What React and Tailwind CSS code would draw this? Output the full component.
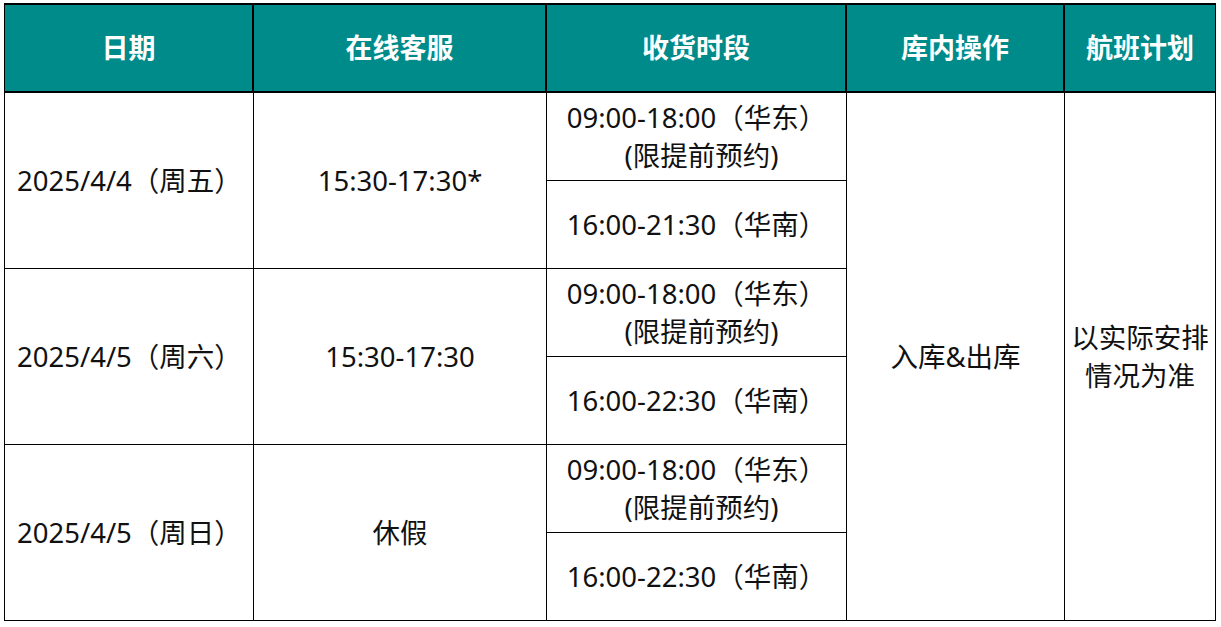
import React from "react";

const font = { fontFamily: '"Noto Sans", "Noto Sans CJK SC", sans-serif' };

function H({ children, last }) {
  return (
    <div
      className={`flex items-center justify-center bg-[#008b8b] text-white font-bold text-[27px] border-b-2 border-black ${last ? "border-r" : "border-r-2"}`}
    >
      {children}
    </div>
  );
}

function C({ children, className = "" }) {
  return (
    <div
      className={`flex items-center justify-center text-center text-[27.5px] leading-[38px] text-[#111] border-r border-b border-black ${className}`}
    >
      {children}
    </div>
  );
}

export default function App() {
  const rows = [
    { date: "2025/4/4（周五）", cs: "15:30-17:30*", south: "16:00-21:30（华南）" },
    { date: "2025/4/5（周六）", cs: "15:30-17:30", south: "16:00-22:30（华南）" },
    { date: "2025/4/5（周日）", cs: "休假", south: "16:00-22:30（华南）" },
  ];
  return (
    <div className="w-[1221px] h-[627px] bg-white pt-[3px] pl-[4px]" style={font}>
      <div className="grid grid-cols-[249px_293px_300px_218px_151px] grid-rows-[88px_repeat(6,88px)] w-fit border-l border-t-2 border-black">
        <H>日期</H>
        <H>在线客服</H>
        <H>收货时段</H>
        <H>库内操作</H>
        <H last>航班计划</H>
        {rows.map((r, i) => (
          <React.Fragment key={i}>
            <C className="row-span-2 !justify-start pl-[12px]">{r.date}</C>
            <C className="row-span-2">{r.cs}</C>
            <C>
              <span>
                09:00-18:00（华东）
                <br />
                <span className="pl-[10px]">(限提前预约)</span>
              </span>
            </C>
            {i === 0 && (
              <>
                <C className="row-span-6">入库&amp;出库</C>
                <C className="row-span-6">
                  <span>
                    以实际安排
                    <br />
                    情况为准
                  </span>
                </C>
              </>
            )}
            <C className="col-start-3">{r.south}</C>
          </React.Fragment>
        ))}
      </div>
    </div>
  );
}
